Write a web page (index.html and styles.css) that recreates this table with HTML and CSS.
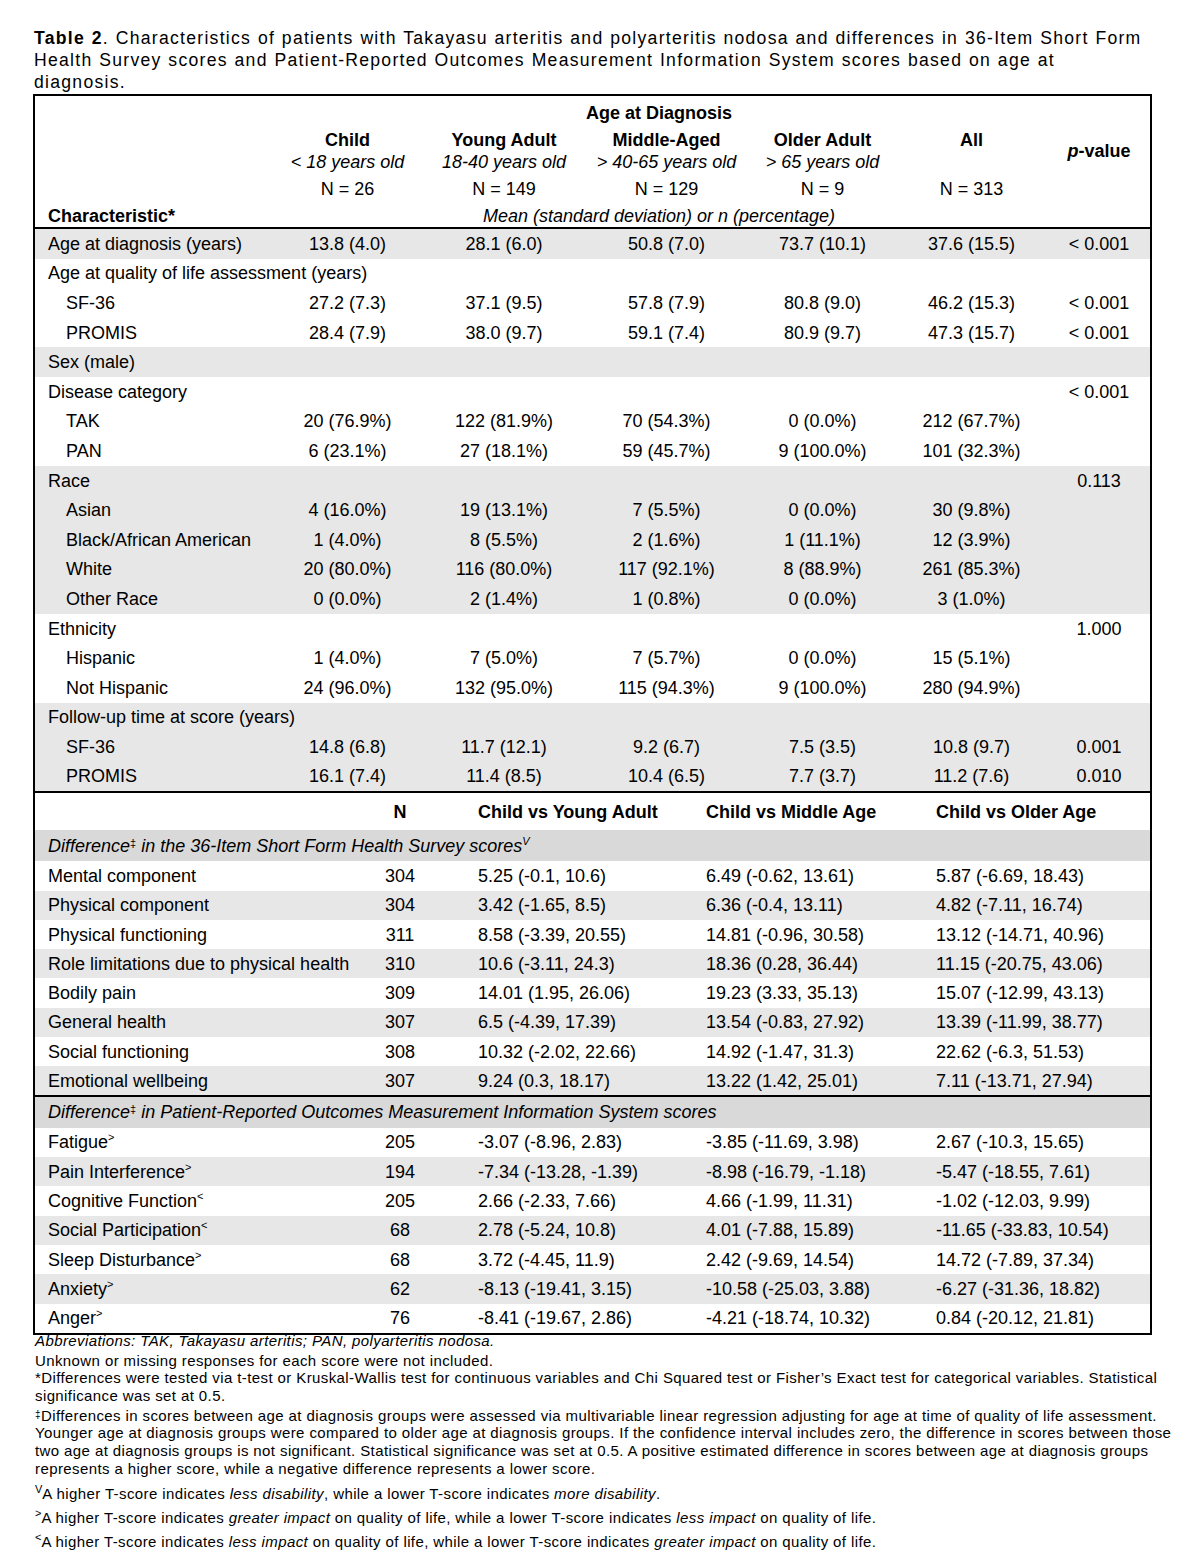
FILE: index.html
```html
<!DOCTYPE html>
<html>
<head>
<meta charset="utf-8">
<link rel="stylesheet" href="styles.css">
</head>
<body>
<div class="page">
  <p class="title"><b>Table 2</b>. Characteristics of patients with Takayasu arteritis and polyarteritis nodosa and differences in 36-Item Short Form<br>Health Survey scores and Patient-Reported Outcomes Measurement Information System scores based on age at<br>diagnosis.</p>
  <div class="box">
    <table class="t1">
      <colgroup>
        <col class="c-label"><col class="c-child"><col class="c-ya"><col class="c-ma"><col class="c-oa"><col class="c-all"><col class="c-p">
      </colgroup>
      <thead>
        <tr class="h1"><td></td><td colspan="5" class="b">Age at Diagnosis</td><td></td></tr>
        <tr class="h2"><td></td><td class="b">Child</td><td class="b">Young Adult</td><td class="b">Middle-Aged</td><td class="b">Older Adult</td><td class="b">All</td><td rowspan="2" class="b pv"><i>p</i>-value</td></tr>
        <tr class="h3"><td></td><td class="i">&lt; 18 years old</td><td class="i">18-40 years old</td><td class="i">&gt; 40-65 years old</td><td class="i">&gt; 65 years old</td><td></td></tr>
        <tr class="h4"><td></td><td>N = 26</td><td>N = 149</td><td>N = 129</td><td>N = 9</td><td>N = 313</td><td></td></tr>
        <tr class="h5"><td class="lbl b">Characteristic*</td><td colspan="5" class="i">Mean (standard deviation) or n (percentage)</td><td></td></tr>
      </thead>
      <tbody>
        <tr class="g"><td class="lbl">Age at diagnosis (years)</td><td>13.8 (4.0)</td><td>28.1 (6.0)</td><td>50.8 (7.0)</td><td>73.7 (10.1)</td><td>37.6 (15.5)</td><td>&lt; 0.001</td></tr>
        <tr><td class="lbl" colspan="7">Age at quality of life assessment (years)</td></tr>
        <tr><td class="lbl ind">SF-36</td><td>27.2 (7.3)</td><td>37.1 (9.5)</td><td>57.8 (7.9)</td><td>80.8 (9.0)</td><td>46.2 (15.3)</td><td>&lt; 0.001</td></tr>
        <tr><td class="lbl ind">PROMIS</td><td>28.4 (7.9)</td><td>38.0 (9.7)</td><td>59.1 (7.4)</td><td>80.9 (9.7)</td><td>47.3 (15.7)</td><td>&lt; 0.001</td></tr>
        <tr class="g"><td class="lbl" colspan="7">Sex (male)</td></tr>
        <tr><td class="lbl" colspan="6">Disease category</td><td>&lt; 0.001</td></tr>
        <tr><td class="lbl ind">TAK</td><td>20 (76.9%)</td><td>122 (81.9%)</td><td>70 (54.3%)</td><td>0 (0.0%)</td><td>212 (67.7%)</td><td></td></tr>
        <tr><td class="lbl ind">PAN</td><td>6 (23.1%)</td><td>27 (18.1%)</td><td>59 (45.7%)</td><td>9 (100.0%)</td><td>101 (32.3%)</td><td></td></tr>
        <tr class="g"><td class="lbl" colspan="6">Race</td><td>0.113</td></tr>
        <tr class="g"><td class="lbl ind">Asian</td><td>4 (16.0%)</td><td>19 (13.1%)</td><td>7 (5.5%)</td><td>0 (0.0%)</td><td>30 (9.8%)</td><td></td></tr>
        <tr class="g"><td class="lbl ind">Black/African American</td><td>1 (4.0%)</td><td>8 (5.5%)</td><td>2 (1.6%)</td><td>1 (11.1%)</td><td>12 (3.9%)</td><td></td></tr>
        <tr class="g"><td class="lbl ind">White</td><td>20 (80.0%)</td><td>116 (80.0%)</td><td>117 (92.1%)</td><td>8 (88.9%)</td><td>261 (85.3%)</td><td></td></tr>
        <tr class="g"><td class="lbl ind">Other Race</td><td>0 (0.0%)</td><td>2 (1.4%)</td><td>1 (0.8%)</td><td>0 (0.0%)</td><td>3 (1.0%)</td><td></td></tr>
        <tr><td class="lbl" colspan="6">Ethnicity</td><td>1.000</td></tr>
        <tr><td class="lbl ind">Hispanic</td><td>1 (4.0%)</td><td>7 (5.0%)</td><td>7 (5.7%)</td><td>0 (0.0%)</td><td>15 (5.1%)</td><td></td></tr>
        <tr><td class="lbl ind">Not Hispanic</td><td>24 (96.0%)</td><td>132 (95.0%)</td><td>115 (94.3%)</td><td>9 (100.0%)</td><td>280 (94.9%)</td><td></td></tr>
        <tr class="g"><td class="lbl" colspan="7">Follow-up time at score (years)</td></tr>
        <tr class="g"><td class="lbl ind">SF-36</td><td>14.8 (6.8)</td><td>11.7 (12.1)</td><td>9.2 (6.7)</td><td>7.5 (3.5)</td><td>10.8 (9.7)</td><td>0.001</td></tr>
        <tr class="g"><td class="lbl ind">PROMIS</td><td>16.1 (7.4)</td><td>11.4 (8.5)</td><td>10.4 (6.5)</td><td>7.7 (3.7)</td><td>11.2 (7.6)</td><td>0.010</td></tr>
      </tbody>
    </table>
    <table class="t2">
      <colgroup>
        <col class="d-label"><col class="d-n"><col class="d-a"><col class="d-b"><col class="d-c">
      </colgroup>
      <tbody>
        <tr class="hd"><td></td><td class="b ctr">N</td><td class="b val">Child vs Young Adult</td><td class="b val">Child vs Middle Age</td><td class="b val">Child vs Older Age</td></tr>
        <tr class="sub"><td class="lbl i" colspan="5">Difference<sup class="dg">&#8225;</sup> in the 36-Item Short Form Health Survey scores<sup class="mk">V</sup></td></tr>
        <tr class="sf"><td class="lbl">Mental component</td><td class="ctr">304</td><td class="val">5.25 (-0.1, 10.6)</td><td class="val">6.49 (-0.62, 13.61)</td><td class="val">5.87 (-6.69, 18.43)</td></tr>
        <tr class="sf g"><td class="lbl">Physical component</td><td class="ctr">304</td><td class="val">3.42 (-1.65, 8.5)</td><td class="val">6.36 (-0.4, 13.11)</td><td class="val">4.82 (-7.11, 16.74)</td></tr>
        <tr class="sf"><td class="lbl">Physical functioning</td><td class="ctr">311</td><td class="val">8.58 (-3.39, 20.55)</td><td class="val">14.81 (-0.96, 30.58)</td><td class="val">13.12 (-14.71, 40.96)</td></tr>
        <tr class="sf g"><td class="lbl">Role limitations due to physical health</td><td class="ctr">310</td><td class="val">10.6 (-3.11, 24.3)</td><td class="val">18.36 (0.28, 36.44)</td><td class="val">11.15 (-20.75, 43.06)</td></tr>
        <tr class="sf"><td class="lbl">Bodily pain</td><td class="ctr">309</td><td class="val">14.01 (1.95, 26.06)</td><td class="val">19.23 (3.33, 35.13)</td><td class="val">15.07 (-12.99, 43.13)</td></tr>
        <tr class="sf g"><td class="lbl">General health</td><td class="ctr">307</td><td class="val">6.5 (-4.39, 17.39)</td><td class="val">13.54 (-0.83, 27.92)</td><td class="val">13.39 (-11.99, 38.77)</td></tr>
        <tr class="sf"><td class="lbl">Social functioning</td><td class="ctr">308</td><td class="val">10.32 (-2.02, 22.66)</td><td class="val">14.92 (-1.47, 31.3)</td><td class="val">22.62 (-6.3, 51.53)</td></tr>
        <tr class="g last"><td class="lbl">Emotional wellbeing</td><td class="ctr">307</td><td class="val">9.24 (0.3, 18.17)</td><td class="val">13.22 (1.42, 25.01)</td><td class="val">7.11 (-13.71, 27.94)</td></tr>
        <tr class="sub"><td class="lbl i" colspan="5">Difference<sup class="dg">&#8225;</sup> in Patient-Reported Outcomes Measurement Information System scores</td></tr>
        <tr class="pr"><td class="lbl">Fatigue<sup class="mk">&gt;</sup></td><td class="ctr">205</td><td class="val">-3.07 (-8.96, 2.83)</td><td class="val">-3.85 (-11.69, 3.98)</td><td class="val">2.67 (-10.3, 15.65)</td></tr>
        <tr class="g pr"><td class="lbl">Pain Interference<sup class="mk">&gt;</sup></td><td class="ctr">194</td><td class="val">-7.34 (-13.28, -1.39)</td><td class="val">-8.98 (-16.79, -1.18)</td><td class="val">-5.47 (-18.55, 7.61)</td></tr>
        <tr class="pr"><td class="lbl">Cognitive Function<sup class="mk">&lt;</sup></td><td class="ctr">205</td><td class="val">2.66 (-2.33, 7.66)</td><td class="val">4.66 (-1.99, 11.31)</td><td class="val">-1.02 (-12.03, 9.99)</td></tr>
        <tr class="g pr"><td class="lbl">Social Participation<sup class="mk">&lt;</sup></td><td class="ctr">68</td><td class="val">2.78 (-5.24, 10.8)</td><td class="val">4.01 (-7.88, 15.89)</td><td class="val">-11.65 (-33.83, 10.54)</td></tr>
        <tr class="pr"><td class="lbl">Sleep Disturbance<sup class="mk">&gt;</sup></td><td class="ctr">68</td><td class="val">3.72 (-4.45, 11.9)</td><td class="val">2.42 (-9.69, 14.54)</td><td class="val">14.72 (-7.89, 37.34)</td></tr>
        <tr class="g pr"><td class="lbl">Anxiety<sup class="mk">&gt;</sup></td><td class="ctr">62</td><td class="val">-8.13 (-19.41, 3.15)</td><td class="val">-10.58 (-25.03, 3.88)</td><td class="val">-6.27 (-31.36, 18.82)</td></tr>
        <tr class="pr"><td class="lbl">Anger<sup class="mk">&gt;</sup></td><td class="ctr">76</td><td class="val">-8.41 (-19.67, 2.86)</td><td class="val">-4.21 (-18.74, 10.32)</td><td class="val">0.84 (-20.12, 21.81)</td></tr>
      </tbody>
    </table>
  </div>
  <div class="notes">
    <p class="n-abbr"><i>Abbreviations: TAK, Takayasu arteritis; PAN, polyarteritis nodosa.</i></p>
    <p class="n-unk">Unknown or missing responses for each score were not included.</p>
    <p class="n-star">*Differences were tested via t-test or Kruskal-Wallis test for continuous variables and Chi Squared test or Fisher’s Exact test for categorical variables. Statistical<br>significance was set at 0.5.</p>
    <p class="n-dag"><span class="fdg">&#8225;</span>Differences in scores between age at diagnosis groups were assessed via multivariable linear regression adjusting for age at time of quality of life assessment.<br>Younger age at diagnosis groups were compared to older age at diagnosis groups. If the confidence interval includes zero, the difference in scores between those<br>two age at diagnosis groups is not significant. Statistical significance was set at 0.5. A positive estimated difference in scores between age at diagnosis groups<br>represents a higher score, while a negative difference represents a lower score.</p>
    <p class="n-mk n-first"><sup class="fmk">V</sup>A higher T-score indicates <i>less disability</i>, while a lower T-score indicates <i>more disability</i>.</p>
    <p class="n-mk"><sup class="fmk">&gt;</sup>A higher T-score indicates <i>greater impact</i> on quality of life, while a lower T-score indicates <i>less impact</i> on quality of life.</p>
    <p class="n-mk"><sup class="fmk">&lt;</sup>A higher T-score indicates <i>less impact</i> on quality of life, while a lower T-score indicates <i>greater impact</i> on quality of life.</p>
  </div>
</div>
</body>
</html>
```

FILE: styles.css
```css
body {
  margin: 0;
  background: #fff;
  color: #000;
  font-family: "Liberation Sans", Arial, sans-serif;
}

.page {
  padding: 27px 0 0 33px;
  width: 1119px;
}

.title {
  margin: 0 0 1px 1px;
  font-size: 17.6px;
  letter-spacing: 1.27px;
  word-spacing: 0.6px;
  line-height: 22px;
  white-space: nowrap;
}

.box {
  border: 2px solid #000;
  width: 1115px;
}

table {
  width: 100%;
  table-layout: fixed;
  border-collapse: separate;
  border-spacing: 0;
  font-size: 18px;
}

td {
  padding: 0;
  text-align: center;
  vertical-align: middle;
  white-space: nowrap;
  line-height: 20px;
}

.b { font-weight: bold; }
.i { font-style: italic; }

.lbl {
  text-align: left;
  padding-left: 13px;
}

.ind { padding-left: 31px; }

/* first table columns */
.c-label { width: 235px; }
.c-child { width: 155px; }
.c-ya { width: 158px; }
.c-ma { width: 167px; }
.c-oa { width: 145px; }
.c-all { width: 153px; }
.c-p { width: 102px; }

.t1 .h1 td { height: 33px; }
.t1 .h2 td { height: 22px; }
.t1 .h3 td { height: 22px; }
.t1 .h4 td { height: 31px; }
.t1 .h5 td {
  height: 23px;
  border-bottom: 2px solid #000;
}

.t1 tbody td { height: 29.6px; }

.g { background: #e7e7e7; }
.sub { background: #d9d9d9; }

/* second table */
.t2 { border-top: 2px solid #000; }
.d-label { width: 325px; }
.d-n { width: 80px; }
.d-a { width: 228px; }
.d-b { width: 230px; }
.d-c { width: 252px; }

.ctr { text-align: center; }
.val {
  text-align: left;
  padding-left: 38px;
}

.t2 .hd td { height: 37px; }
.t2 .sub td { height: 31px; }
.t2 .sf td { height: 29.3px; }
.t2 .last td {
  height: 28.3px;
  border-bottom: 2px solid #000;
}
.t2 .pr td { height: 29.35px; }

sup {
  line-height: 0;
  font-style: normal;
}

.dg {
  font-size: 11px;
  vertical-align: 5px;
}

.sub .mk {
  font-style: italic;
}

.mk {
  font-size: 11px;
  vertical-align: 7px;
}

/* footnotes */
.notes {
  font-size: 15px;
  letter-spacing: 0.4px;
  line-height: 17.6px;
  white-space: nowrap;
  padding-left: 2px;
}

.notes p { margin: 0; }
.notes .n-abbr { margin-top: -3px; }
.notes .n-unk { margin-top: 2px; }
.notes .n-dag { margin-top: 2.4px; }
.notes .n-mk { margin-top: 6.4px; }
.notes .n-first { margin-top: 8px; }

.fdg {
  font-size: 10px;
  vertical-align: 3px;
  line-height: 0;
}

.fmk {
  font-size: 11px;
  vertical-align: 6px;
  letter-spacing: 0;
}
```
